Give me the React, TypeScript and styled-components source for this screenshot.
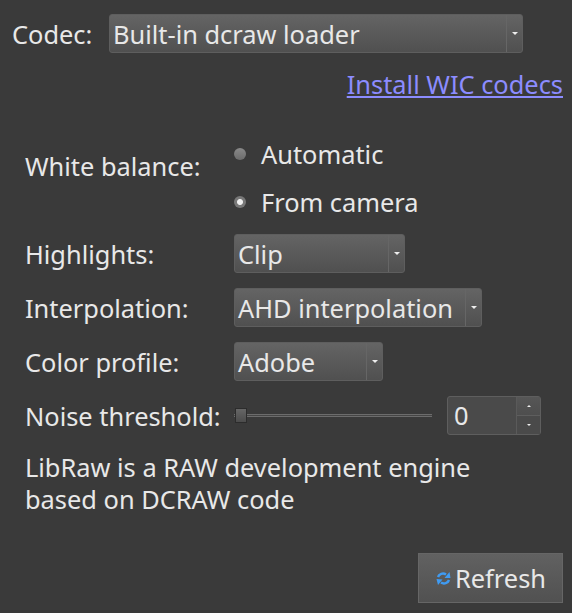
import * as React from "react";
import styled, { createGlobalStyle } from "styled-components";

const GlobalStyle = createGlobalStyle`
  html, body {
    margin: 0;
    padding: 0;
    background: #3a3a3a;
  }
`;

const Panel = styled.div`
  width: 572px;
  height: 613px;
  box-sizing: border-box;
  padding: 14px 9px 10px 12px;
  display: flex;
  flex-direction: column;
  background: #3a3a3a;
  color: #e8e8e8;
  font-family: "Noto Sans", "Open Sans", sans-serif;
  font-size: 25.4px;
  line-height: 34px;
`;

const CodecRow = styled.div`
  display: flex;
  align-items: center;
  padding-right: 40px;
`;

const CodecLabel = styled.span`
  flex: none;
  width: 97px;
`;

const LinkRow = styled.div`
  display: flex;
  justify-content: flex-end;
  margin-top: 14px;
`;

const Link = styled.a`
  color: #8c8cff;
  text-decoration: underline;
  cursor: pointer;
`;

const Form = styled.div`
  display: grid;
  grid-template-columns: 209px 1fr;
  align-items: center;
  row-gap: 15px;
  margin: 36px 0 0 13px;
`;

const TopLabel = styled.span`
  align-self: start;
  margin-top: 12px;
`;

const RadioGroup = styled.div`
  display: flex;
  flex-direction: column;
  gap: 14px;
`;

const RadioRow = styled.label`
  display: flex;
  align-items: center;
  gap: 15px;
`;

const RadioDot = styled.span<{ $checked?: boolean }>`
  width: 12px;
  height: 12px;
  border-radius: 50%;
  background: ${p =>
    p.$checked
      ? "radial-gradient(circle, #f0f0f0 0 2.5px, #787878 3.5px)"
      : "linear-gradient(#8a8a8a, #6c6c6c)"};
`;

const Select = styled.div<{ $width: number | string }>`
  width: ${p => (typeof p.$width === "number" ? `${p.$width}px` : p.$width)};
  flex: ${p => (typeof p.$width === "number" ? "none" : "1")};
  height: 39px;
  box-sizing: border-box;
  display: flex;
  align-items: center;
  justify-content: space-between;
  border: 1px solid #5e5e5e;
  border-radius: 3px;
  background: linear-gradient(#646464, #505050);
`;

const SelectText = styled.span`
  padding-left: 3px;
  white-space: nowrap;
`;

const SelectArrow = styled.span`
  align-self: stretch;
  flex: none;
  width: 15px;
  display: flex;
  align-items: center;
  justify-content: center;
  border-left: 1px solid #666;
  &::after {
    content: "";
    border-left: 3px solid transparent;
    border-right: 3px solid transparent;
    border-top: 3px solid #eee;
  }
`;

const NoiseControls = styled.div`
  display: flex;
  align-items: center;
  gap: 15px;
`;

const Slider = styled.div`
  position: relative;
  width: 198px;
  height: 1px;
  border: 1px solid #6c6c6c;
  border-width: 1px 0;
  background: #454545;
`;

const SliderHandle = styled.span`
  position: absolute;
  left: 1px;
  top: -7px;
  width: 12px;
  height: 15px;
  box-sizing: border-box;
  border: 1px solid #2c2c2c;
  background: linear-gradient(#666, #4c4c4c);
`;

const Spin = styled.div`
  width: 94px;
  height: 39px;
  box-sizing: border-box;
  display: flex;
  border: 1px solid #5e5e5e;
  border-radius: 3px;
  background: #4a4a4a;
`;

const SpinValue = styled.span`
  flex: 1;
  padding-left: 6px;
  line-height: 36px;
`;

const SpinButtons = styled.div`
  width: 23px;
  display: flex;
  flex-direction: column;
  border-left: 1px solid #5a5a5a;
`;

const SpinButton = styled.span<{ $up?: boolean }>`
  flex: 1;
  display: flex;
  align-items: center;
  justify-content: center;
  background: ${p => (p.$up ? "linear-gradient(#565656, #4e4e4e)" : "#4a4a4a")};
  border-top: ${p => (p.$up ? "none" : "1px solid #5e5e5e")};
  &::after {
    content: "";
    border-left: 2px solid transparent;
    border-right: 2px solid transparent;
    border-top: ${p => (p.$up ? "none" : "2px solid #eee")};
    border-bottom: ${p => (p.$up ? "2px solid #eee" : "none")};
  }
`;

const Note = styled.p`
  margin: 16px 0 0 13px;
  line-height: 32px;
`;

const Footer = styled.div`
  margin-top: auto;
  display: flex;
  justify-content: flex-end;
`;

const RefreshButton = styled.button`
  width: 145px;
  height: 50px;
  display: flex;
  align-items: center;
  justify-content: center;
  gap: 4px;
  padding: 0 0 0 1px;
  border: 1px solid #666;
  background: linear-gradient(#616161, #515151);
  color: inherit;
  font: inherit;
`;

const RefreshIcon = () => (
  <svg width="15" height="15" viewBox="0 0 15 15" fill="none" stroke="#3f9bf2" strokeWidth="2.4">
    <path d="M2 6 C3 3 7 1.5 10 3.5" />
    <path d="M13 9 C12 12 8 13.5 5 11.5" />
    <path d="M8.5 7 L14.5 7 L13.5 1 Z" fill="#3f9bf2" stroke="none" />
    <path d="M0.5 8 L6.5 8.5 L2 14 Z" fill="#3f9bf2" stroke="none" />
  </svg>
);

const DropDown = ({ width, children }: { width: number | string; children: string }) => (
  <Select $width={width}>
    <SelectText>{children}</SelectText>
    <SelectArrow />
  </Select>
);

export default function App() {
  return (
    <Panel>
      <GlobalStyle />
      <CodecRow>
        <CodecLabel>Codec:</CodecLabel>
        <DropDown width="auto">Built-in dcraw loader</DropDown>
      </CodecRow>
      <LinkRow>
        <Link>Install WIC codecs</Link>
      </LinkRow>
      <Form>
        <TopLabel>White balance:</TopLabel>
        <RadioGroup>
          <RadioRow>
            <RadioDot />
            Automatic
          </RadioRow>
          <RadioRow>
            <RadioDot $checked />
            From camera
          </RadioRow>
        </RadioGroup>
        <span>Highlights:</span>
        <DropDown width={171}>Clip</DropDown>
        <span>Interpolation:</span>
        <DropDown width={248}>AHD interpolation</DropDown>
        <span>Color profile:</span>
        <DropDown width={149}>Adobe</DropDown>
        <span>Noise threshold:</span>
        <NoiseControls>
          <Slider>
            <SliderHandle />
          </Slider>
          <Spin>
            <SpinValue>0</SpinValue>
            <SpinButtons>
              <SpinButton $up />
              <SpinButton />
            </SpinButtons>
          </Spin>
        </NoiseControls>
      </Form>
      <Note>
        LibRaw is a RAW development engine
        <br />
        based on DCRAW code
      </Note>
      <Footer>
        <RefreshButton>
          <RefreshIcon />
          Refresh
        </RefreshButton>
      </Footer>
    </Panel>
  );
}
